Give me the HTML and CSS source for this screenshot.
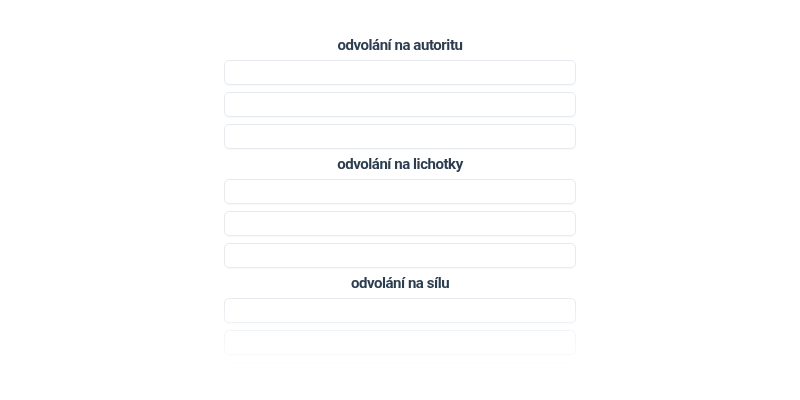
FILE: index.html
```html
<!DOCTYPE html>
<html lang="cs">
<head>
    <meta charset="UTF-8">
    <meta name="viewport" content="width=device-width, initial-scale=1.0">
    <title>Argumentační fauly</title>
    <link rel="stylesheet" href="styles.css">
</head>
<body>
    <div class="seznam">
        <!-- Odvolání na autoritu -->
        <div class="skupina">
            <h2 class="nadpis">odvolání na autoritu</h2>
            <input class="pole" type="text">
            <input class="pole" type="text">
            <input class="pole" type="text">
        </div>

        <!-- Odvolání na lichotky -->
        <div class="skupina">
            <h2 class="nadpis">odvolání na lichotky</h2>
            <input class="pole" type="text">
            <input class="pole" type="text">
            <input class="pole" type="text">
        </div>

        <!-- Odvolání na sílu -->
        <div class="skupina">
            <h2 class="nadpis">odvolání na sílu</h2>
            <input class="pole" type="text">
            <input class="pole" type="text">
            <input class="pole" type="text">
        </div>
    </div>
</body>
</html>
```

FILE: styles.css
```css
:root {
    --text: #2c3e50;
    --okraj: #e6eaee;
    --bila: #ffffff;
}

body {
    font-family: 'Roboto', 'Liberation Sans', sans-serif;
    background-color: var(--bila);
    margin: 0;
    padding: 0;
    height: 400px;
    overflow: hidden;
}

.seznam {
    width: 352px;
    margin: 0 auto;
    padding-top: 37px;
    height: 334px;
    overflow: hidden;
    display: flex;
    flex-direction: column;
    gap: 7px;
    /* spodek seznamu se postupně ztrácí */
    -webkit-mask-image: linear-gradient(to bottom, black 80%, transparent 100%);
    mask-image: linear-gradient(to bottom, black 80%, transparent 100%);
}

.skupina {
    display: flex;
    flex-direction: column;
    gap: 7px;
}

.nadpis {
    margin: 0;
    text-align: center;
    font-size: 15px;
    line-height: 16px;
    font-weight: 700;
    letter-spacing: -0.45px;
    color: var(--text);
}

.pole {
    box-sizing: border-box;
    width: 100%;
    height: 25px;
    margin: 0;
    border: 1px solid var(--okraj);
    border-radius: 5px;
    background: var(--bila);
    box-shadow: 0 1px 2px rgba(0, 0, 0, 0.03);
    outline: none;
}
```
